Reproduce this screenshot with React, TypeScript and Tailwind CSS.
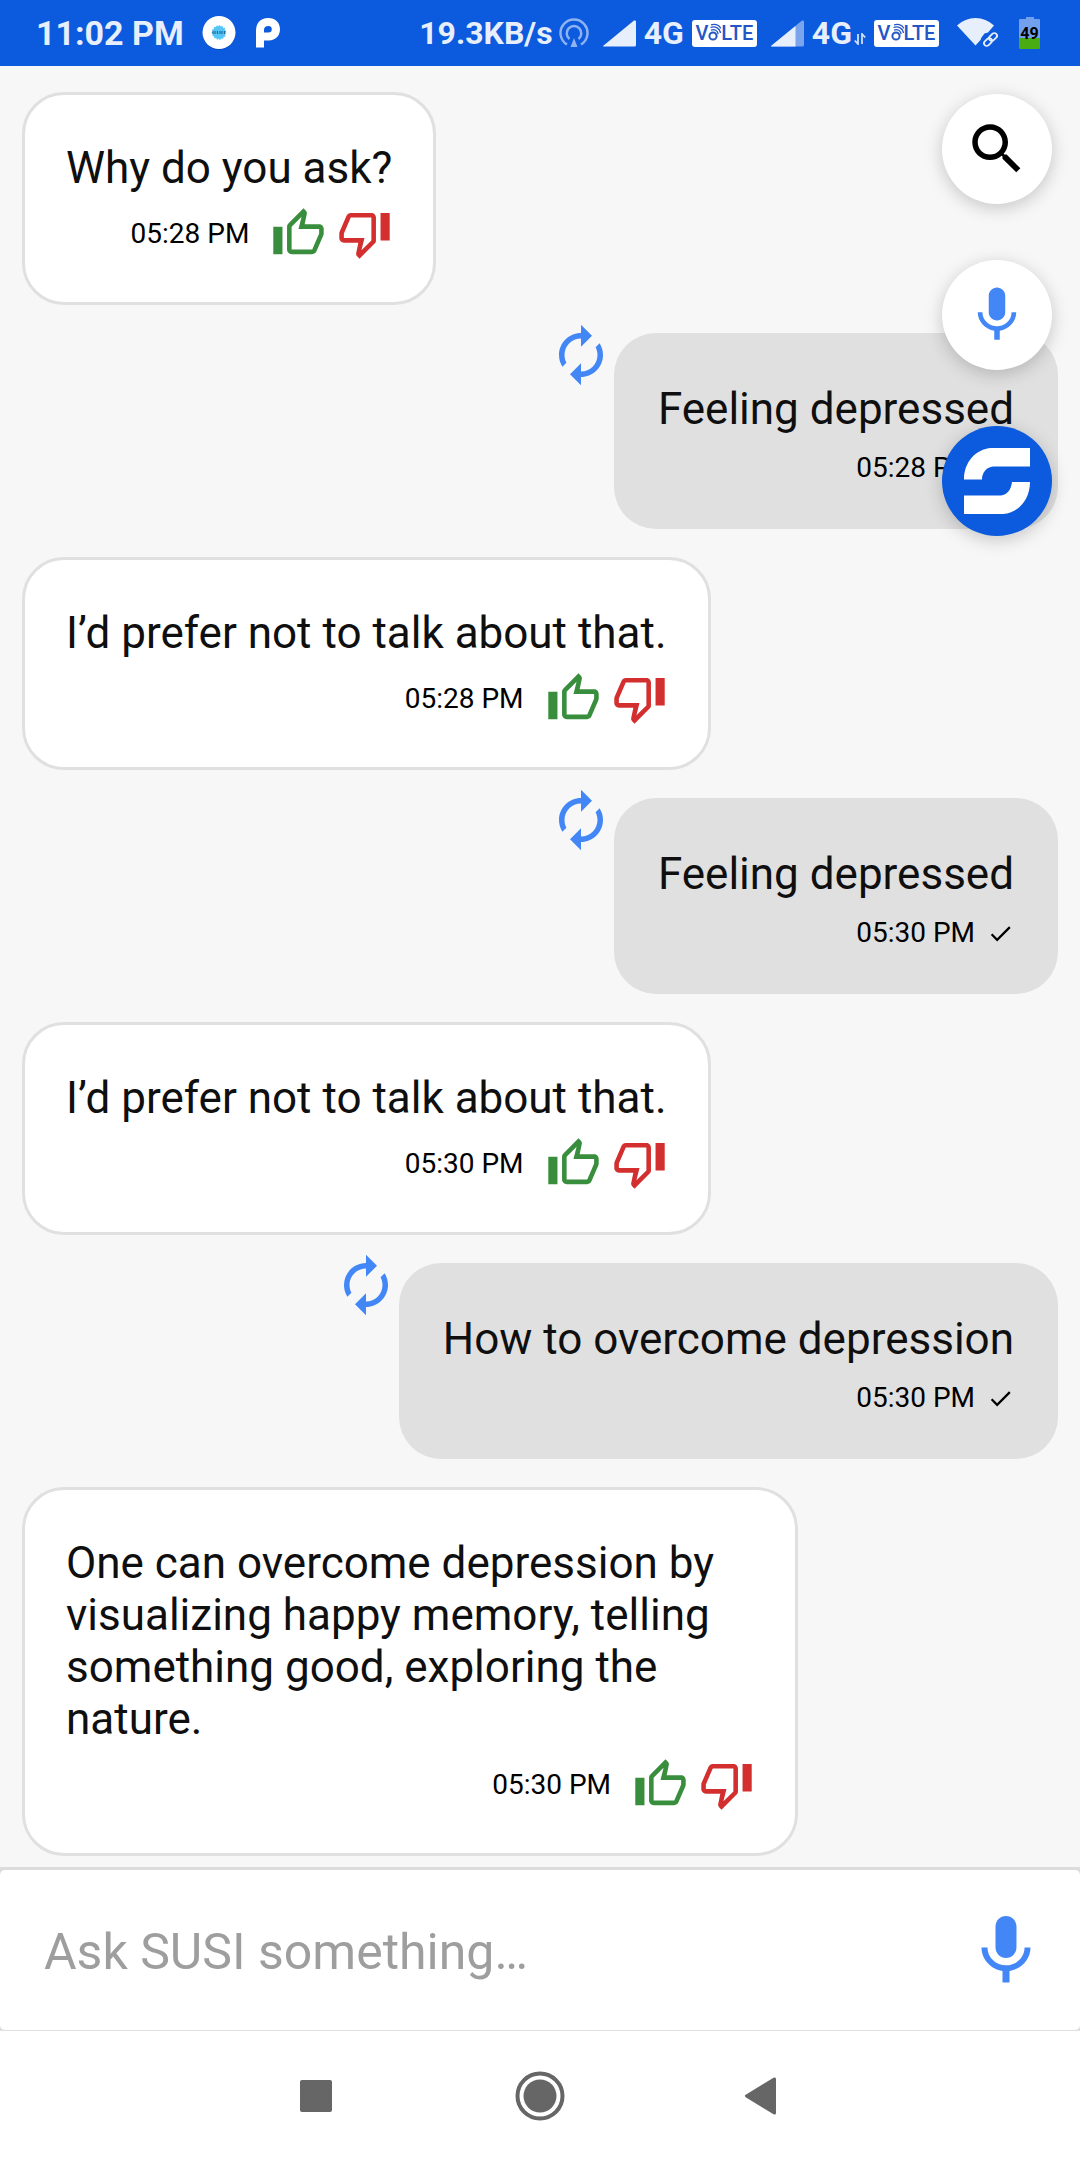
import React, { useState } from "react";

type Message = { from: "bot" | "user"; text: string; time: string };

const messages: Message[] = [
  { from: "bot", text: "Why do you ask?", time: "05:28 PM" },
  { from: "user", text: "Feeling depressed", time: "05:28 PM" },
  { from: "bot", text: "I’d prefer not to talk about that.", time: "05:28 PM" },
  { from: "user", text: "Feeling depressed", time: "05:30 PM" },
  { from: "bot", text: "I’d prefer not to talk about that.", time: "05:30 PM" },
  { from: "user", text: "How to overcome depression", time: "05:30 PM" },
  {
    from: "bot",
    text: "One can overcome depression by visualizing happy memory, telling something good, exploring the nature.",
    time: "05:30 PM",
  },
];

function Icon({ d, className }: { d: string; className: string }) {
  return (
    <svg viewBox="0 0 24 24" fill="currentColor" aria-hidden="true" className={className}>
      <path d={d} />
    </svg>
  );
}

const paths = {
  thumbUp:
    "M9 21h9c.83 0 1.54-.5 1.84-1.22l3.02-7.05c.09-.23.14-.47.14-.73v-2c0-1.1-.9-2-2-2h-6.31l.95-4.57.03-.32c0-.41-.17-.79-.44-1.06L14.17 1 7.58 7.59C7.22 7.95 7 8.45 7 9v10c0 1.1.9 2 2 2zM9 9l4.34-4.34L12 10h9v2l-3 7H9V9zM1 9h4v12H1z",
  thumbDown:
    "M15 3H6c-.83 0-1.54.5-1.84 1.22l-3.02 7.05c-.09.23-.14.47-.14.73v2c0 1.1.9 2 2 2h6.31l-.95 4.57-.03.32c0 .41.17.79.44 1.06L9.83 23l6.59-6.59c.36-.36.58-.86.58-1.41V5c0-1.1-.9-2-2-2zm0 12l-4.34 4.34L12 14H3v-2l3-7h9v10zm4-12h4v12h-4z",
  renew:
    "M12 6v3l4-4-4-4v3c-4.42 0-8 3.58-8 8 0 1.57.46 3.03 1.24 4.26L6.7 14.8c-.45-.83-.7-1.79-.7-2.8 0-3.31 2.69-6 6-6zm6.76 1.74L17.3 9.2c.44.84.7 1.79.7 2.8 0 3.31-2.69 6-6 6v-3l-4 4 4 4v-3c4.42 0 8-3.58 8-8 0-1.57-.46-3.03-1.24-4.26z",
  done: "M9 16.2L4.8 12l-1.4 1.4L9 19 21 7l-1.4-1.4L9 16.2z",
  search:
    "M15.5 14h-.79l-.28-.27C15.41 12.59 16 11.11 16 9.5 16 5.91 13.09 3 9.5 3S3 5.91 3 9.5 5.91 16 9.5 16c1.61 0 3.09-.59 4.23-1.57l.27.28v.79l5 4.99L20.49 19l-4.99-5zm-6 0C7.01 14 5 11.99 5 9.5S7.01 5 9.5 5 14 7.01 14 9.5 11.99 14 9.5 14z",
  mic: "M12 14c1.66 0 2.99-1.34 2.99-3L15 5c0-1.66-1.34-3-3-3S9 3.34 9 5v6c0 1.66 1.34 3 3 3zm5.3-3c0 3-2.54 5.1-5.3 5.1S6.7 14 6.7 11H5c0 3.41 2.72 6.23 6 6.72V21h2v-3.28c3.28-.48 6-3.3 6-6.72h-1.7z",
};

function VolteBadge() {
  return (
    <span className="flex h-[27px] w-[65px] items-center justify-center rounded-[3px] bg-white text-[20px] leading-none font-medium text-[#2457c5]">
      V
      <svg viewBox="0 0 13 20" fill="none" stroke="currentColor" aria-hidden="true" className="h-5 w-[13px]">
        <circle cx="5" cy="13" r="3.6" strokeWidth="2" />
        <path d="M3 7.2c3.600-1.500 6.700.4 7.200 4M2.500 4.500c5-1.800 9.500 1 10 5.500M3 1.800c4.500-1 8.300.6 9.800 3.600" strokeWidth="1.300" />
      </svg>
      LTE
    </span>
  );
}

function Signal({ weak }: { weak?: boolean }) {
  return (
    <svg viewBox="0 0 33 27" aria-hidden="true" className="h-[27px] w-[33px]">
      <path d="M0 26 31 .5Q33 0 33 1.500V25q0 1.500-1.500 1.500H1Q0 26.500 0 26z" fill="#e7eefc" fillOpacity={weak ? 0.5 : 1} />
      {weak && <path d="M0 26 24.500 6v20.500H1Q0 26.500 0 26z" fill="#e7eefc" />}
    </svg>
  );
}

function StatusBar() {
  return (
    <header className="flex h-[66px] items-center justify-between bg-[#0c5add] pr-10 pl-9 font-bold text-[#e7eefc]">
      <div className="flex items-center">
        <time className="text-[34px] leading-10">11:02 PM</time>
        <svg viewBox="0 0 34 34" aria-hidden="true" className="ml-[18px] h-[34px] w-[34px]">
          <circle cx="17" cy="17.500" r="16.500" fill="#0a3f9f" fillOpacity=".45" />
          <circle cx="17" cy="16.500" r="16.500" fill="#fff" />
          <circle cx="17" cy="16.500" r="6.500" fill="#55c5f7" />
          <circle cx="17" cy="16.500" r="6.500" fill="none" stroke="#55c5f7" strokeWidth="1.500" strokeDasharray="1.500 1.200" />
          <path d="M11 15v3M13 15v3M15.500 15v3M18 15v3M20 15v3M22.500 15v3" stroke="#1c6f9c" strokeWidth="1.200" />
        </svg>
        <svg viewBox="0 0 24 30" aria-hidden="true" className="ml-5 h-[30px] w-6">
          <path
            fillRule="evenodd"
            d="M0 29.500V13C0 5 4.500 0 12 0s12 4.800 12 11.300-4.500 11.200-11 11.200H8v7zM8 14.500h4.500a3.200 3.200 0 0 0 0-6.500C9.500 8 8 9.500 8 12z"
            fill="#fff"
          />
        </svg>
      </div>
      <div className="flex items-center text-[32px] leading-10">
        <span>19.3KB/s</span>
        <svg viewBox="0 0 30 30" fill="none" stroke="#8fb2f0" strokeWidth="2.500" aria-hidden="true" className="ml-1.5 h-[30px] w-[30px]">
          <path d="M8 26.500a13.500 13.500 0 1 1 14 0" />
          <path d="M10.500 21a7.300 7.300 0 1 1 9 0" />
          <path d="M15 20l-3.500 9h7z" fill="#8fb2f0" stroke="none" />
        </svg>
        <div className="ml-3.5 flex items-center gap-2">
          <Signal />
          <span>4G</span>
          <VolteBadge />
        </div>
        <div className="ml-3.5 flex items-center gap-2">
          <Signal weak />
          <span className="flex items-end">
            4G
            <svg viewBox="0 0 12 12" fill="none" stroke="#cfdefa" strokeWidth="1.800" aria-hidden="true" className="mb-2 ml-0.5 h-3 w-3">
              <path d="M4 1v10L.8 7.500M8 11V1l3.200 3.500" />
            </svg>
          </span>
          <VolteBadge />
        </div>
        <svg viewBox="0 0 41 30" aria-hidden="true" className="ml-[18px] h-[30px] w-[41px]">
          <path d="M0 7.500Q8 0 18.500 0T37 7.500L31 14.500l-3.500 1-3 4-1 2.500-5 5.500z" fill="#e7eefc" />
          <g fill="none" stroke="#e7eefc" strokeWidth="1.800">
            <rect x="-4.500" y="-2.700" width="9" height="5.400" rx="2.700" transform="translate(31 24) rotate(-45)" />
            <rect x="-4.500" y="-2.700" width="9" height="5.400" rx="2.700" transform="translate(36 19) rotate(-45)" />
          </g>
        </svg>
        <span className="ml-[21px] flex flex-col items-center">
          <span className="h-0.5 w-2 bg-[#729fee]" />
          <span className="flex h-[30px] w-[21px] items-center justify-center rounded-[1px] bg-linear-to-b from-[#729fee] from-62% to-[#49ac12] to-62% text-[16px] leading-none text-black">
            49
          </span>
        </span>
      </div>
    </header>
  );
}

function BotMessage({ text, time }: Message) {
  return (
    <li className="mt-[11px] flex max-w-[calc(100%-260px)] flex-col gap-3 self-start rounded-[42px] border-3 border-[#e0e0e0] bg-white px-[41px] pt-[47px] pb-[41px]">
      <p>{text}</p>
      <div className="flex items-center justify-end">
        <time className="text-[28px] leading-[34px] text-black">{time}</time>
        <button type="button" aria-label="Thumbs up" className="ml-[22px] text-[#388e3c]">
          <Icon d={paths.thumbUp} className="h-[55px] w-[55px]" />
        </button>
        <button type="button" aria-label="Thumbs down" className="ml-[11px] text-[#d32f2f]">
          <Icon d={paths.thumbDown} className="h-[55px] w-[55px]" />
        </button>
      </div>
    </li>
  );
}

function UserMessage({ text, time }: Message) {
  return (
    <li className="flex items-start self-end">
      <button type="button" aria-label="Ask again" className="text-[#4387f7]">
        <Icon d={paths.renew} className="h-[66px] w-[66px]" />
      </button>
      <div className="mt-[11px] rounded-[42px] bg-[#e0e0e0] px-11 pt-[50px] pb-11">
        <p>{text}</p>
        <div className="mt-4 flex items-center justify-end gap-3">
          <time className="text-[28px] leading-[34px] text-black">{time}</time>
          <Icon d={paths.done} className="h-[27px] w-[27px] text-black" />
        </div>
      </div>
    </li>
  );
}

function FloatingButtons() {
  return (
    <div className="absolute top-7 right-7 flex flex-col gap-14">
      <button
        type="button"
        aria-label="Search"
        className="flex h-[110px] w-[110px] items-center justify-center rounded-full bg-white text-black shadow-[0_4px_18px_rgba(0,0,0,0.2)]"
      >
        <Icon d={paths.search} className="h-[66px] w-[66px]" />
      </button>
      <button
        type="button"
        aria-label="Voice"
        className="flex h-[110px] w-[110px] items-center justify-center rounded-full bg-white text-[#4387f7] shadow-[0_4px_18px_rgba(0,0,0,0.2)]"
      >
        <Icon d={paths.mic} className="h-[66px] w-[66px]" />
      </button>
      <button
        type="button"
        aria-label="SUSI"
        className="flex h-[110px] w-[110px] items-center justify-center rounded-full bg-[#0c5add] shadow-[0_4px_18px_rgba(0,0,0,0.2)]"
      >
        <svg viewBox="0 0 66 66" fill="#fff" aria-hidden="true" className="h-[66px] w-[66px]">
          <path d="M66 0H27C12 1 0 14 0 31.500h18C18 24 23 19 29 18.500H66z" />
          <path d="M0 66h39C54 65 66 52 66 34H48C47 42 43 47 37 47.500H0z" />
        </svg>
      </button>
    </div>
  );
}

export default function App() {
  const [draft, setDraft] = useState("");
  return (
    <div className="flex min-h-screen flex-col bg-[#f7f7f7] font-[Roboto,sans-serif]">
      <StatusBar />
      <main className="relative flex-1">
        <ul className="flex flex-col gap-[17px] px-[22px] pt-[15px] pb-[11px] text-[44px] leading-[52px] text-[#0f0f0f]">
          {messages.map((m, i) =>
            m.from === "bot" ? <BotMessage key={i} {...m} /> : <UserMessage key={i} {...m} />,
          )}
        </ul>
        <FloatingButtons />
      </main>
      <form
        className="border-t-3 border-b border-t-[#dcdcdc] border-b-[#e0e0e0] bg-[#dcdcdc]"
        onSubmit={(e) => e.preventDefault()}
      >
        <div className="flex h-40 items-center rounded-[5px] bg-white pr-8 pl-11">
          <input
            type="text"
            aria-label="Ask SUSI something"
            placeholder="Ask SUSI something…"
            value={draft}
            onChange={(e) => setDraft(e.target.value)}
            className="min-w-0 flex-1 pt-1 text-[50px] leading-[60px] text-[#0f0f0f] outline-none placeholder:text-[#9e9e9e]"
          />
          <button type="button" aria-label="Speak" className="pt-0.5 text-[#4387f7]">
            <Icon d={paths.mic} className="h-[84px] w-[84px]" />
          </button>
        </div>
      </form>
      <nav className="flex h-[129px] items-center justify-center gap-40 bg-white text-[#666]">
        <button type="button" aria-label="Recent apps" className="flex w-16 justify-center">
          <span className="h-8 w-8 rounded-[2px] bg-[#666]" />
        </button>
        <button type="button" aria-label="Home" className="flex w-16 justify-center">
          <svg viewBox="0 0 50 50" aria-hidden="true" className="h-[50px] w-[50px]">
            <circle cx="25" cy="25" r="22.500" fill="none" stroke="currentColor" strokeWidth="4" />
            <circle cx="25" cy="25" r="16.500" fill="currentColor" />
          </svg>
        </button>
        <button type="button" aria-label="Back" className="flex w-16 justify-center">
          <svg viewBox="0 0 40 40" fill="currentColor" aria-hidden="true" className="h-10 w-10">
            <path d="M1.700 18.800 29.500 1.800Q32 .8 32 3v34q0 2.200-2.500 1.200L1.700 21.200q-1.700-1.200 0-2.400z" />
          </svg>
        </button>
      </nav>
    </div>
  );
}
